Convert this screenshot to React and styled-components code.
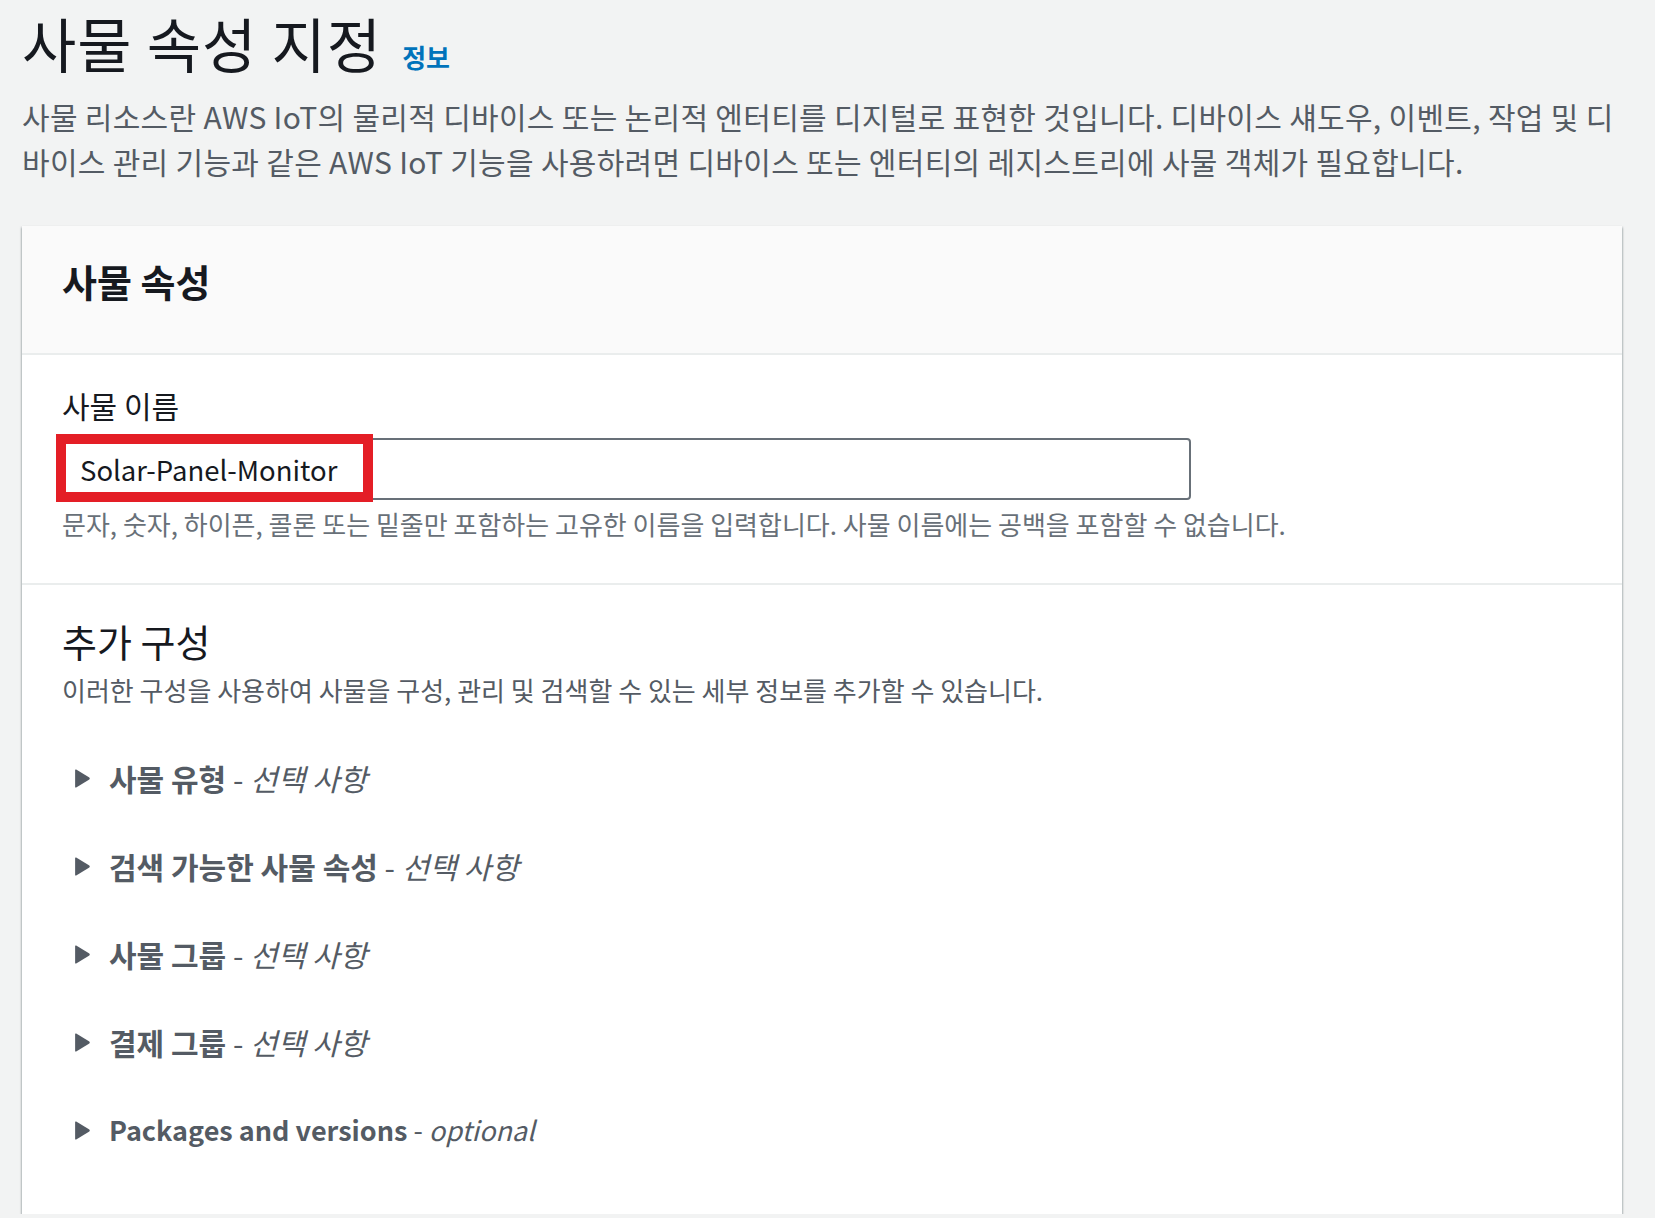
import React from "react";
import styled, { createGlobalStyle } from "styled-components";

const GlobalStyle = createGlobalStyle`
  html, body {
    margin: 0;
    padding: 0;
    background: #f2f3f3;
  }
  body {
    font-family: "Noto Sans CJK KR", "Noto Sans", sans-serif;
    color: #16191f;
  }
  * {
    box-sizing: border-box;
  }
`;

const sections = [
  { title: "사물 유형", hint: "선택 사항" },
  { title: "검색 가능한 사물 속성", hint: "선택 사항" },
  { title: "사물 그룹", hint: "선택 사항" },
  { title: "결제 그룹", hint: "선택 사항" },
  { title: "Packages and versions", hint: "optional", latin: true },
];

export default function App() {
  return (
    <>
      <GlobalStyle />
      <Page>
        <TitleRow>
          <Title>사물 속성 지정</Title>
          <InfoLink href="#">정보</InfoLink>
        </TitleRow>
        <Intro>
          사물 리소스란 AWS IoT의 물리적 디바이스 또는 논리적 엔터티를 디지털로
          표현한 것입니다. 디바이스 섀도우, 이벤트, 작업 및 디바이스 관리 기능과
          같은 AWS IoT 기능을 사용하려면 디바이스 또는 엔터티의 레지스트리에 사물
          객체가 필요합니다.
        </Intro>

        <Card>
          <CardHeader>
            <CardTitle>사물 속성</CardTitle>
          </CardHeader>

          <Section>
            <FieldLabel htmlFor="thing-name">사물 이름</FieldLabel>
            <InputWrap>
              <TextInput
                id="thing-name"
                defaultValue="Solar-Panel-Monitor"
                spellCheck={false}
              />
              <Highlight />
            </InputWrap>
            <HelpText>
              문자, 숫자, 하이픈, 콜론 또는 밑줄만 포함하는 고유한 이름을
              입력합니다. 사물 이름에는 공백을 포함할 수 없습니다.
            </HelpText>
          </Section>

          <Section $last>
            <SubTitle>추가 구성</SubTitle>
            <SubText>
              이러한 구성을 사용하여 사물을 구성, 관리 및 검색할 수 있는 세부
              정보를 추가할 수 있습니다.
            </SubText>
            <ExpandList>
              {sections.map((s) => (
                <ExpandRow key={s.title}>
                  <Caret viewBox="0 0 16 20" aria-hidden="true">
                    <path
                      d="M2 1.5 L14.5 9 Q15.5 10 14.5 11 L2 18.5 Q1 19 1 18 L1 2 Q1 1 2 1.5 Z"
                      fill="#545b64"
                    />
                  </Caret>
                  <RowText $latin={s.latin}>
                    <strong>{s.title}</strong> - <em>{s.hint}</em>
                  </RowText>
                </ExpandRow>
              ))}
            </ExpandList>
          </Section>
        </Card>
      </Page>
    </>
  );
}

const Page = styled.div`
  padding: 12px 33px 0 22px;
`;

const TitleRow = styled.div`
  display: flex;
  align-items: baseline;
  gap: 20px;
`;

const Title = styled.h1`
  margin: 0;
  font-size: 59px;
  font-weight: 400;
  line-height: 62px;
  letter-spacing: 1px;
  color: #16191f;
`;

const InfoLink = styled.a`
  font-size: 26px;
  font-weight: 700;
  color: #0073bb;
  text-decoration: none;
`;

const Intro = styled.p`
  margin: 19px 0 0;
  font-size: 30px;
  line-height: 45px;
  letter-spacing: 0.3px;
  color: #545b64;
`;

const Card = styled.div`
  margin-top: 42px;
  background: #fff;
  box-shadow: 0 2px 2px 0 rgba(0, 28, 36, 0.35),
    1px 1px 2px 0 rgba(0, 28, 36, 0.15), -1px 1px 2px 0 rgba(0, 28, 36, 0.15);
`;

const CardHeader = styled.div`
  background: #fafafa;
  padding: 31px 40px 49px;
  border-bottom: 2px solid #eaeded;
`;

const CardTitle = styled.h2`
  margin: 0;
  font-size: 38px;
  font-weight: 700;
  line-height: 47px;
  color: #16191f;
`;

const Section = styled.div`
  padding: ${(p) => (p.$last ? "32px 40px 40px" : "32px 40px 43px")};
  border-bottom: ${(p) => (p.$last ? "none" : "2px solid #eaeded")};
`;

const FieldLabel = styled.label`
  display: block;
  font-size: 30px;
  line-height: 36px;
  color: #16191f;
  margin-bottom: 15px;
`;

const InputWrap = styled.div`
  position: relative;
  width: 1133px;
  margin-left: -4px;
`;

const TextInput = styled.input`
  display: block;
  width: 100%;
  height: 62px;
  padding: 0 20px;
  border: 2px solid #687078;
  border-radius: 4px;
  background: #fff;
  font-family: "Noto Sans CJK KR", "Noto Sans", sans-serif;
  font-size: 27.5px;
  color: #16191f;
  outline: none;
`;

const Highlight = styled.div`
  position: absolute;
  top: -4px;
  left: -2px;
  width: 317px;
  height: 68px;
  border: 10px solid #e41e26;
  pointer-events: none;
`;

const HelpText = styled.div`
  margin-top: 8px;
  font-size: 26px;
  line-height: 32px;
  color: #687078;
`;

const SubTitle = styled.h3`
  margin: 0;
  font-size: 38px;
  font-weight: 400;
  line-height: 47px;
  color: #16191f;
`;

const SubText = styled.div`
  margin-top: 10px;
  font-size: 26px;
  line-height: 32px;
  color: #545b64;
`;

const ExpandList = styled.div`
  margin-top: 28px;
  display: flex;
  flex-direction: column;
`;

const ExpandRow = styled.div`
  display: flex;
  align-items: center;
  height: 88px;
  padding-left: 12px;
  gap: 18px;
  cursor: pointer;
`;

const Caret = styled.svg`
  width: 17px;
  height: 21px;
  flex-shrink: 0;
`;

const RowText = styled.span`
  font-size: ${(p) => (p.$latin ? "27px" : "30px")};
  line-height: 36px;
  color: #545b64;

  strong {
    font-weight: 700;
  }
  em {
    font-style: italic;
  }
`;
